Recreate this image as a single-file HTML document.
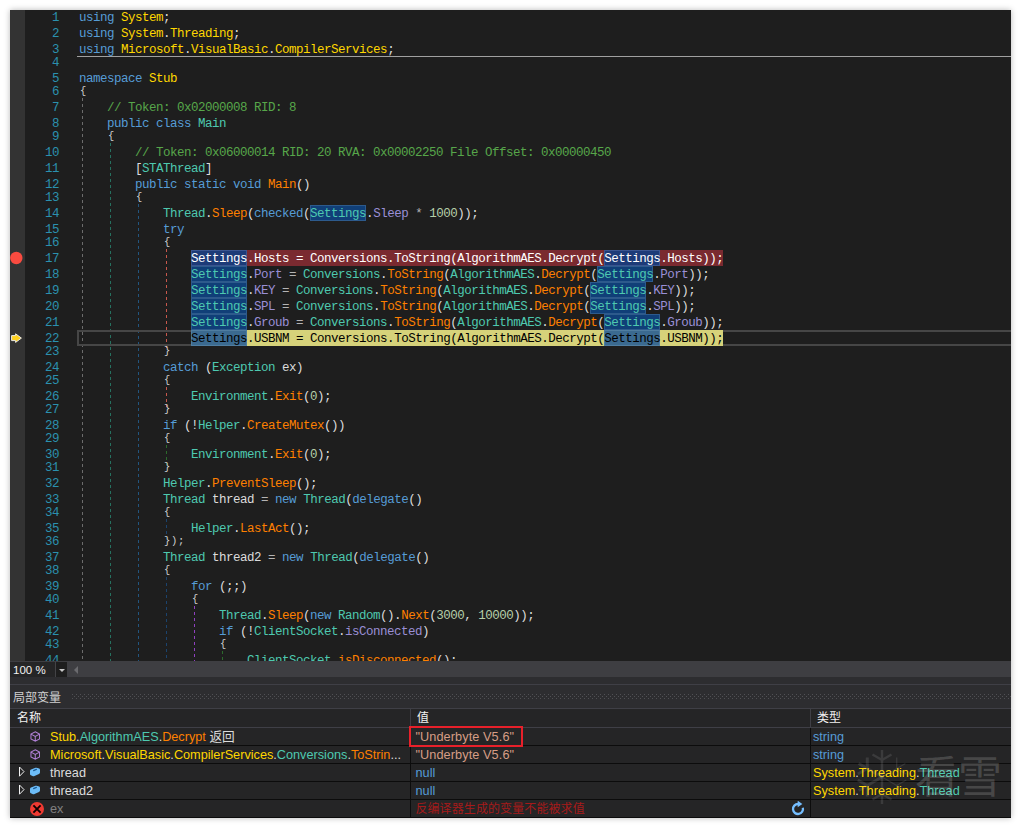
<!DOCTYPE html>
<html lang="zh-CN"><head><meta charset="utf-8"><title>dnSpy</title>
<style>
html,body{margin:0;padding:0;background:#fff;}
body{width:1021px;height:828px;position:relative;overflow:hidden;font-family:"Liberation Sans","Noto Sans CJK SC",sans-serif;}
#win{position:absolute;left:10px;top:10px;width:1001px;height:808px;background:#1e1e1e;box-shadow:0 0 6px rgba(0,0,0,.28);overflow:hidden;}
#ed{position:absolute;left:0;top:0;width:1001px;height:651px;background:#1e1e1e;overflow:hidden;font-family:"Liberation Mono","DejaVu Sans Mono",monospace;font-size:12.5px;letter-spacing:-0.5px;line-height:16px;color:#dcdcdc;}
#gm{position:absolute;left:0;top:0;width:15px;height:651px;background:#333333;}
.ln{position:absolute;left:28px;width:21px;text-align:right;color:#2b91af;height:16px;white-space:pre;}
.cd{position:absolute;height:16px;white-space:pre;}
.cd b,.nm b,.ty b{font-weight:normal;}
.br{font-size:10.5px;letter-spacing:.7px;color:#d0d0d0}
.k{color:#569cd6}.n{color:#ffd700}.t{color:#4ec9b0}.m{color:#ff8000}.c{color:#57a64a}.f{color:#9a8fd6}.u{color:#b5cea8}.l{color:#dcdcdc}.o{color:#b4b4b4}
.h{color:#4ec9b0}
.hb{position:absolute;width:56px;height:16px;box-sizing:border-box;background:#103f78;border:1px solid #2d5a8c;}
.hbr{background:#1d3b78;border-color:#3a5590}
.hby{background:#3b6a90;border-color:#4f7da0}
.bp,.bp b{color:#ffffff}
.cs,.cs b{color:#000000}
.bp .h{color:#fff}.cs .h{color:#000}
.bpbg{position:absolute;height:16px;background:#7a2a30;}
.csbg{position:absolute;height:16px;background:#d6d27a;}
.g{position:absolute;width:1px;background:repeating-linear-gradient(to bottom,var(--c) 0,var(--c) 3px,transparent 3px,transparent 6px);}
#sep{position:absolute;left:67px;top:46px;width:934px;height:1px;background:#a0a0a0;}
#cl{position:absolute;left:67px;top:320px;width:934px;height:16px;box-sizing:border-box;border:2px solid #464646;border-right:none;}
#zb{position:absolute;left:0;top:651px;width:1001px;height:17px;background:#3e3e42;}
#zc{position:absolute;left:0;top:1px;width:46px;height:15px;background:#252526;color:#f1f1f1;font-size:11.5px;line-height:17px;padding-left:3px;box-sizing:border-box;border-right:1px solid #434346;}
#zd{position:absolute;left:46px;top:1px;width:11px;height:15px;background:#1e1e1e;}
#zd:after{content:"";position:absolute;left:3px;top:7px;border:3px solid transparent;border-top:3px solid #c8c8c8;border-bottom:none;}
#za{position:absolute;left:64px;top:5px;border:4px solid transparent;border-right:4px solid #6a6a6e;border-left:none;}
#band{position:absolute;left:0;top:667px;width:1001px;height:7px;background:#2d2d30;}
#tb{position:absolute;left:0;top:674px;width:1001px;height:25px;background:#2d2d30;border-top:1px solid #3f3f46;border-bottom:1px solid #3f3f46;box-sizing:border-box;}
#tt{position:absolute;left:3px;top:4.5px;font-size:12px;line-height:17px;color:#d0d0d0;}
#grip{position:absolute;left:62px;top:9px;width:939px;height:5px;
background-image:radial-gradient(circle at .5px .5px,#505054 .6px,transparent .7px),radial-gradient(circle at .5px .5px,#505054 .6px,transparent .7px);
background-size:4px 4px,4px 4px;background-position:0 0,2px 2px;}
#tbl{position:absolute;left:0;top:699px;width:1001px;height:109px;background:#252526;}
.hd{position:absolute;top:1px;height:17px;font-size:12px;line-height:17px;color:#f1f1f1;}
.hs{position:absolute;top:0;width:1px;height:18px;background:#3f3f46;}
#hl{position:absolute;left:0;top:18px;width:1001px;height:1px;background:#3f3f46;}
.row{position:absolute;left:0;width:1001px;height:17px;border-bottom:1px solid #0c0c0c;font-size:12.7px;line-height:17px;color:#dcdcdc;white-space:nowrap;}
.row span{position:absolute;top:1px;}
.vs{position:absolute;top:19px;width:1px;height:90px;background:#0c0c0c;}
.nm{left:40px}.vl{left:405.4px;letter-spacing:.1px}.ty{left:803px}
.str{color:#d69d85}.kw{color:#569cd6}.err{color:#a51a1a;font-size:12px}
.dim{color:#808080}
#red{position:absolute;left:399px;top:716px;width:114px;height:21px;box-sizing:border-box;border:2px solid #e8202a;}
#wm{position:absolute;left:905px;top:744px;font-size:44px;line-height:48px;color:rgba(255,255,255,.17);letter-spacing:-1px;white-space:nowrap;}
</style></head>
<body>
<div id="win">
<div id="ed">
<div id="gm"></div>
<i class="g" style="left:72px;top:88px;height:563px;--c:#6c6c6c"></i>
<i class="g" style="left:100px;top:133px;height:518px;--c:#26705f"></i>
<i class="g" style="left:128px;top:194px;height:457px;--c:#22557f"></i>
<i class="g" style="left:156px;top:239px;height:100px;--c:#c8584c"></i>
<i class="g" style="left:156px;top:377px;height:20px;--c:#c8584c"></i>
<i class="g" style="left:156px;top:435px;height:20px;--c:#2c6a2c"></i>
<i class="g" style="left:156px;top:509px;height:20px;--c:#1b436e"></i>
<i class="g" style="left:156px;top:567px;height:84px;--c:#1b436e"></i>
<i class="g" style="left:184px;top:596px;height:55px;--c:#9040c0"></i>
<i class="g" style="left:212px;top:641px;height:10px;--c:#2c6a2c"></i>
<div id="sep"></div>
<div id="cl"></div>
<div class="bpbg" style="left:181px;top:240px;width:532px"></div>
<div class="csbg" style="left:181px;top:320px;width:532px"></div>
<div class="hb" style="left:300px;top:195px"></div>
<div class="hb hbr" style="left:181px;top:240px"></div>
<div class="hb hbr" style="left:594px;top:240px"></div>
<div class="hb" style="left:181px;top:256px"></div>
<div class="hb" style="left:587px;top:256px"></div>
<div class="hb" style="left:181px;top:272px"></div>
<div class="hb" style="left:580px;top:272px"></div>
<div class="hb" style="left:181px;top:288px"></div>
<div class="hb" style="left:580px;top:288px"></div>
<div class="hb" style="left:181px;top:304px"></div>
<div class="hb" style="left:594px;top:304px"></div>
<div class="hb hby" style="left:181px;top:320px"></div>
<div class="hb hby" style="left:594px;top:320px"></div>
<div class="ln" style="top:-0.3px">1</div>
<div class="cd" style="top:-0.3px;left:69px"><b class="k">using</b> <b class="n">System</b>;</div>
<div class="ln" style="top:15.7px">2</div>
<div class="cd" style="top:15.7px;left:69px"><b class="k">using</b> <b class="n">System</b>.<b class="n">Threading</b>;</div>
<div class="ln" style="top:31.7px">3</div>
<div class="cd" style="top:31.7px;left:69px"><b class="k">using</b> <b class="n">Microsoft</b>.<b class="n">VisualBasic</b>.<b class="n">CompilerServices</b>;</div>
<div class="ln" style="top:44.7px">4</div>
<div class="ln" style="top:60.7px">5</div>
<div class="cd" style="top:60.7px;left:69px"><b class="k">namespace</b> <b class="n">Stub</b></div>
<div class="ln" style="top:73.7px">6</div>
<div class="cd br" style="top:73.2px;left:70.0px">{</div>
<div class="ln" style="top:89.7px">7</div>
<div class="cd" style="top:89.7px;left:97px"><b class="c">// Token: 0x02000008 RID: 8</b></div>
<div class="ln" style="top:105.7px">8</div>
<div class="cd" style="top:105.7px;left:97px"><b class="k">public</b> <b class="k">class</b> <b class="t">Main</b></div>
<div class="ln" style="top:118.7px">9</div>
<div class="cd br" style="top:118.2px;left:98.0px">{</div>
<div class="ln" style="top:134.7px">10</div>
<div class="cd" style="top:134.7px;left:125px"><b class="c">// Token: 0x06000014 RID: 20 RVA: 0x00002250 File Offset: 0x00000450</b></div>
<div class="ln" style="top:150.7px">11</div>
<div class="cd" style="top:150.7px;left:125px">[<b class="t">STAThread</b>]</div>
<div class="ln" style="top:166.7px">12</div>
<div class="cd" style="top:166.7px;left:125px"><b class="k">public</b> <b class="k">static</b> <b class="k">void</b> <b class="m">Main</b>()</div>
<div class="ln" style="top:179.7px">13</div>
<div class="cd br" style="top:179.2px;left:126.0px">{</div>
<div class="ln" style="top:195.7px">14</div>
<div class="cd" style="top:195.7px;left:153px"><b class="t">Thread</b>.<b class="m">Sleep</b>(<b class="k">checked</b>(<b class="h">Settings</b>.<b class="f">Sleep</b> <b class="o">*</b> <b class="u">1000</b>));</div>
<div class="ln" style="top:211.7px">15</div>
<div class="cd" style="top:211.7px;left:153px"><b class="k">try</b></div>
<div class="ln" style="top:224.7px">16</div>
<div class="cd br" style="top:224.2px;left:154.0px">{</div>
<div class="ln" style="top:240.7px">17</div>
<div class="cd bp" style="top:240.7px;left:181px"><b class="h">Settings</b>.<b class="f">Hosts</b> <b class="o">=</b> <b class="t">Conversions</b>.<b class="m">ToString</b>(<b class="t">AlgorithmAES</b>.<b class="m">Decrypt</b>(<b class="h">Settings</b>.<b class="f">Hosts</b>));</div>
<div class="ln" style="top:256.7px">18</div>
<div class="cd" style="top:256.7px;left:181px"><b class="h">Settings</b>.<b class="f">Port</b> <b class="o">=</b> <b class="t">Conversions</b>.<b class="m">ToString</b>(<b class="t">AlgorithmAES</b>.<b class="m">Decrypt</b>(<b class="h">Settings</b>.<b class="f">Port</b>));</div>
<div class="ln" style="top:272.7px">19</div>
<div class="cd" style="top:272.7px;left:181px"><b class="h">Settings</b>.<b class="f">KEY</b> <b class="o">=</b> <b class="t">Conversions</b>.<b class="m">ToString</b>(<b class="t">AlgorithmAES</b>.<b class="m">Decrypt</b>(<b class="h">Settings</b>.<b class="f">KEY</b>));</div>
<div class="ln" style="top:288.7px">20</div>
<div class="cd" style="top:288.7px;left:181px"><b class="h">Settings</b>.<b class="f">SPL</b> <b class="o">=</b> <b class="t">Conversions</b>.<b class="m">ToString</b>(<b class="t">AlgorithmAES</b>.<b class="m">Decrypt</b>(<b class="h">Settings</b>.<b class="f">SPL</b>));</div>
<div class="ln" style="top:304.7px">21</div>
<div class="cd" style="top:304.7px;left:181px"><b class="h">Settings</b>.<b class="f">Groub</b> <b class="o">=</b> <b class="t">Conversions</b>.<b class="m">ToString</b>(<b class="t">AlgorithmAES</b>.<b class="m">Decrypt</b>(<b class="h">Settings</b>.<b class="f">Groub</b>));</div>
<div class="ln" style="top:320.7px">22</div>
<div class="cd cs" style="top:320.7px;left:181px"><b class="h">Settings</b>.<b class="f">USBNM</b> <b class="o">=</b> <b class="t">Conversions</b>.<b class="m">ToString</b>(<b class="t">AlgorithmAES</b>.<b class="m">Decrypt</b>(<b class="h">Settings</b>.<b class="f">USBNM</b>));</div>
<div class="ln" style="top:333.7px">23</div>
<div class="cd br" style="top:333.2px;left:154.0px">}</div>
<div class="ln" style="top:349.7px">24</div>
<div class="cd" style="top:349.7px;left:153px"><b class="k">catch</b> (<b class="t">Exception</b> <b class="l">ex</b>)</div>
<div class="ln" style="top:362.7px">25</div>
<div class="cd br" style="top:362.2px;left:154.0px">{</div>
<div class="ln" style="top:378.7px">26</div>
<div class="cd" style="top:378.7px;left:181px"><b class="t">Environment</b>.<b class="m">Exit</b>(<b class="u">0</b>);</div>
<div class="ln" style="top:391.7px">27</div>
<div class="cd br" style="top:391.2px;left:154.0px">}</div>
<div class="ln" style="top:407.7px">28</div>
<div class="cd" style="top:407.7px;left:153px"><b class="k">if</b> (!<b class="t">Helper</b>.<b class="m">CreateMutex</b>())</div>
<div class="ln" style="top:420.7px">29</div>
<div class="cd br" style="top:420.2px;left:154.0px">{</div>
<div class="ln" style="top:436.7px">30</div>
<div class="cd" style="top:436.7px;left:181px"><b class="t">Environment</b>.<b class="m">Exit</b>(<b class="u">0</b>);</div>
<div class="ln" style="top:449.7px">31</div>
<div class="cd br" style="top:449.2px;left:154.0px">}</div>
<div class="ln" style="top:465.7px">32</div>
<div class="cd" style="top:465.7px;left:153px"><b class="t">Helper</b>.<b class="m">PreventSleep</b>();</div>
<div class="ln" style="top:481.7px">33</div>
<div class="cd" style="top:481.7px;left:153px"><b class="t">Thread</b> <b class="l">thread</b> <b class="o">=</b> <b class="k">new</b> <b class="t">Thread</b>(<b class="k">delegate</b>()</div>
<div class="ln" style="top:494.7px">34</div>
<div class="cd br" style="top:494.2px;left:154.0px">{</div>
<div class="ln" style="top:510.7px">35</div>
<div class="cd" style="top:510.7px;left:181px"><b class="t">Helper</b>.<b class="m">LastAct</b>();</div>
<div class="ln" style="top:523.7px">36</div>
<div class="cd br" style="top:523.2px;left:154.0px">});</div>
<div class="ln" style="top:539.7px">37</div>
<div class="cd" style="top:539.7px;left:153px"><b class="t">Thread</b> <b class="l">thread2</b> <b class="o">=</b> <b class="k">new</b> <b class="t">Thread</b>(<b class="k">delegate</b>()</div>
<div class="ln" style="top:552.7px">38</div>
<div class="cd br" style="top:552.2px;left:154.0px">{</div>
<div class="ln" style="top:568.7px">39</div>
<div class="cd" style="top:568.7px;left:181px"><b class="k">for</b> (;;)</div>
<div class="ln" style="top:581.7px">40</div>
<div class="cd br" style="top:581.2px;left:182.0px">{</div>
<div class="ln" style="top:597.7px">41</div>
<div class="cd" style="top:597.7px;left:209px"><b class="t">Thread</b>.<b class="m">Sleep</b>(<b class="k">new</b> <b class="t">Random</b>().<b class="m">Next</b>(<b class="u">3000</b>, <b class="u">10000</b>));</div>
<div class="ln" style="top:613.7px">42</div>
<div class="cd" style="top:613.7px;left:209px"><b class="k">if</b> (!<b class="t">ClientSocket</b>.<b class="f">isConnected</b>)</div>
<div class="ln" style="top:626.7px">43</div>
<div class="cd br" style="top:626.2px;left:210.0px">{</div>
<div class="ln" style="top:642.7px">44</div>
<div class="cd" style="top:642.7px;left:237px"><b class="t">ClientSocket</b>.<b class="m">isDisconnected</b>();</div>

<svg style="position:absolute;left:0;top:241px" width="14" height="14" viewBox="0 0 14 14"><circle cx="6.3" cy="7" r="6.2" fill="#f94b40"/></svg>
<svg style="position:absolute;left:1px;top:322px" width="12" height="12" viewBox="0 0 12 12"><path d="M0.6 3.6 H4.6 V1.8 L10.4 6.1 L4.6 10.4 V8.6 H0.6 Z" fill="#ffd21f" stroke="#ebe9e4" stroke-width="1"/></svg>
</div>

<div id="zb"><div id="zc">100 %</div><div id="zd"></div><div id="za"></div></div>
<div id="band"></div>
<div id="tb"><div id="tt">局部变量</div><div id="grip"></div></div>
<div id="tbl">
<div class="hd" style="left:7px">名称</div><div class="hs" style="left:400px"></div><div class="hd" style="left:407px">值</div><div class="hs" style="left:800px"></div><div class="hd" style="left:807px">类型</div>
<div id="hl"></div>
<div class="row" style="top:19px"><svg class="ic" style="position:absolute;left:19.5px;top:2.5px" width="10.5" height="11" viewBox="0.5 0.5 11 11"><path d="M6 1 L10.5 3.5 V8.5 L6 11 L1.5 8.5 V3.5 Z M1.5 3.5 L6 6 L10.5 3.5 M6 6 V11" fill="none" stroke="#b180d7" stroke-width="1.05"/></svg><span class="nm"><b class="n">Stub</b>.<b class="t">AlgorithmAES</b>.<b class="m">Decrypt</b> 返回</span><span class="vl str">"Underbyte V5.6"</span><span class="ty kw">string</span></div>
<div class="row" style="top:37px"><svg class="ic" style="position:absolute;left:19.5px;top:2.5px" width="10.5" height="11" viewBox="0.5 0.5 11 11"><path d="M6 1 L10.5 3.5 V8.5 L6 11 L1.5 8.5 V3.5 Z M1.5 3.5 L6 6 L10.5 3.5 M6 6 V11" fill="none" stroke="#b180d7" stroke-width="1.05"/></svg><span class="nm"><b class="n">Microsoft</b>.<b class="n">VisualBasic</b>.<b class="n">CompilerServices</b>.<b class="t">Conversions</b>.<b class="m">ToStrin</b>...</span><span class="vl str">"Underbyte V5.6"</span><span class="ty kw">string</span></div>
<div class="row" style="top:55px"><svg style="position:absolute;left:8px;top:1.5px" width="8" height="12" viewBox="0 0 8 12"><path d="M1.5 1 L6 5.6 L1.5 10.2 Z" fill="none" stroke="#f1f1f1" stroke-width="1"/></svg><svg style="position:absolute;left:19px;top:2.5px" width="12" height="10" viewBox="0 0 12 10"><path d="M1 4 Q1 3 2 2.6 L6.5 0.8 Q7.5 0.5 8.5 0.9 L10.2 1.6 Q11 2 11 3 V5.6 Q11 6.5 10 7 L5.5 9 Q4.5 9.4 3.5 9 L1.8 8.2 Q1 7.8 1 7 Z" fill="#6cbcf7"/><path d="M4.6 3.6 L7.4 2.4" fill="none" stroke="#1d5c94" stroke-width="1.2" stroke-linecap="round"/></svg><span class="nm">thread</span><span class="vl kw">null</span><span class="ty"><b class="n">System</b>.<b class="n">Threading</b>.<b class="t">Thread</b></span></div>
<div class="row" style="top:73px"><svg style="position:absolute;left:8px;top:1.5px" width="8" height="12" viewBox="0 0 8 12"><path d="M1.5 1 L6 5.6 L1.5 10.2 Z" fill="none" stroke="#f1f1f1" stroke-width="1"/></svg><svg style="position:absolute;left:19px;top:2.5px" width="12" height="10" viewBox="0 0 12 10"><path d="M1 4 Q1 3 2 2.6 L6.5 0.8 Q7.5 0.5 8.5 0.9 L10.2 1.6 Q11 2 11 3 V5.6 Q11 6.5 10 7 L5.5 9 Q4.5 9.4 3.5 9 L1.8 8.2 Q1 7.8 1 7 Z" fill="#6cbcf7"/><path d="M4.6 3.6 L7.4 2.4" fill="none" stroke="#1d5c94" stroke-width="1.2" stroke-linecap="round"/></svg><span class="nm">thread2</span><span class="vl kw">null</span><span class="ty"><b class="n">System</b>.<b class="n">Threading</b>.<b class="t">Thread</b></span></div>
<div class="row" style="top:91px"><svg style="position:absolute;left:20px;top:2px" width="14" height="14" viewBox="0 0 14 14"><circle cx="7" cy="7" r="7" fill="#f03a32"/><path d="M3.4 3.4 L10.6 10.6 M10.6 3.4 L3.4 10.6" stroke="#100000" stroke-width="1.9"/></svg><span class="nm dim">ex</span><span class="vl err">反编译器生成的变量不能被求值</span><svg style="position:absolute;left:780px;top:1px" width="16" height="16" viewBox="-8 -8 16 16"><path d="M4.83 -1.29 A5 5 0 1 1 0 -5" fill="none" stroke="#75beff" stroke-width="2.3"/><path d="M-0.3 -8.3 L4.4 -5 L-0.3 -1.7 Z" fill="#75beff"/></svg></div>
<div class="vs" style="left:400px"></div><div class="vs" style="left:800px"></div>
</div>
<div id="red"></div>
<svg width="64" height="64" viewBox="-32 -32 64 64" style="position:absolute;left:840px;top:735px"><g stroke="#ffffff" stroke-opacity=".1" fill="none"><path d="M0 0 L0.0 -27.0 M0.0 -17.0 L9.5 -22.5 M0.0 -17.0 L-9.5 -22.5" stroke-width="2.4"/><path d="M0 0 L-23.4 -13.5 M-14.7 -8.5 L-14.7 -19.5 M-14.7 -8.5 L-24.2 -3.0" stroke-width="3.0"/><path d="M0 0 L-23.4 13.5 M-14.7 8.5 L-24.2 3.0 M-14.7 8.5 L-14.7 19.5" stroke-width="3.0"/><path d="M0 0 L-0.0 27.0 M-0.0 17.0 L-9.5 22.5 M-0.0 17.0 L9.5 22.5" stroke-width="2.4"/><path d="M0 0 L23.4 13.5 M14.7 8.5 L14.7 19.5 M14.7 8.5 L24.2 3.0" stroke-width="1.3"/><path d="M0 0 L23.4 -13.5 M14.7 -8.5 L24.2 -3.0 M14.7 -8.5 L14.7 -19.5" stroke-width="1.3"/></g></svg>
<div id="wm">看雪</div>

</div>
</body></html>
